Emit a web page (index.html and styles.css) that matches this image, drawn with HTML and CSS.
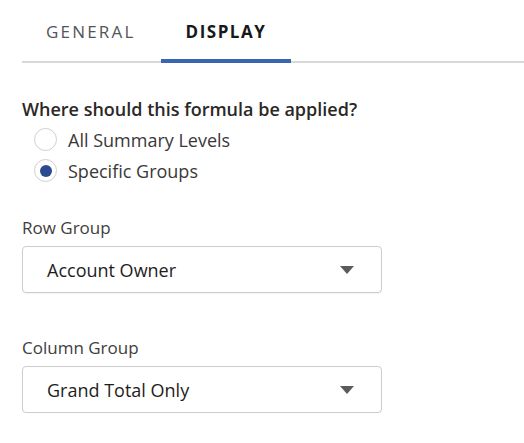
FILE: index.html
```html
<!DOCTYPE html>
<html>
<head>
<meta charset="utf-8">
<link rel="stylesheet" href="styles.css">
</head>
<body>
<div class="panel">
  <div class="tabs">
    <div class="tab">GENERAL</div>
    <div class="tab active">DISPLAY</div>
  </div>
  <div class="content">
    <div class="question">Where should this formula be applied?</div>
    <div class="radios">
      <label class="radio"><span class="circle"></span><span class="rlabel">All Summary Levels</span></label>
      <label class="radio"><span class="circle checked"></span><span class="rlabel">Specific Groups</span></label>
    </div>
    <div class="field first">
      <div class="flabel">Row Group</div>
      <div class="select"><span class="value">Account Owner</span><span class="arrow"></span></div>
    </div>
    <div class="field">
      <div class="flabel">Column Group</div>
      <div class="select"><span class="value">Grand Total Only</span><span class="arrow"></span></div>
    </div>
  </div>
</div>
</body>
</html>
```
FILE: styles.css
```css
html, body {
  margin: 0;
  padding: 0;
  background: #ffffff;
}
body {
  font-family: "Open Sans", Lato, sans-serif;
  color: #2b2826;
}
.panel {
  padding-left: 22px;
}
.tabs {
  display: flex;
  border-bottom: 2px solid #d8d8d8;
  height: 61px;
}
.tab {
  padding: 20px 25px 0 24px;
  font-size: 17px;
  letter-spacing: 2.2px;
  line-height: 24px;
  color: #54555a;
  box-sizing: border-box;
  height: 63px;
}
.tab.active {
  padding: 20px 25px 0 25px;
  letter-spacing: 1.5px;
  font-weight: bold;
  color: #181818;
  border-bottom: 4px solid #3a65b0;
}
.content {
  padding-top: 35px;
}
.question {
  font-size: 18px;
  font-weight: 600;
  line-height: 22px;
  color: #2b2826;
}
.radios {
  padding-left: 12px;
  margin-top: 4px;
}
.radio {
  display: flex;
  align-items: center;
  height: 31px;
}
.circle {
  width: 23px;
  height: 23px;
  border: 1px solid #cfcfcf;
  border-radius: 50%;
  box-sizing: border-box;
  display: flex;
  align-items: center;
  justify-content: center;
  margin-right: 11px;
}
.circle.checked::after {
  content: "";
  width: 12px;
  height: 12px;
  border-radius: 50%;
  background: #2a4c8f;
}
.rlabel {
  font-size: 18px;
  color: #3a3837;
}
.field {
  margin-top: 44px;
}
.field.first {
  margin-top: 31px;
}
.flabel {
  font-size: 17px;
  line-height: 22px;
  color: #3e3e3c;
  margin-bottom: 7px;
}
.select {
  width: 360px;
  height: 47px;
  border: 1px solid #cccccc;
  border-radius: 4px;
  box-sizing: border-box;
  display: flex;
  align-items: center;
  justify-content: space-between;
  padding: 0 27px 0 24px;
  box-shadow: 0 1px 1px rgba(0,0,0,0.05);
}
.value {
  font-size: 18px;
  color: #1e1c1b;
}
.arrow {
  width: 0;
  height: 0;
  border-left: 7px solid transparent;
  border-right: 7px solid transparent;
  border-top: 8px solid #5b5b5b;
}
```
